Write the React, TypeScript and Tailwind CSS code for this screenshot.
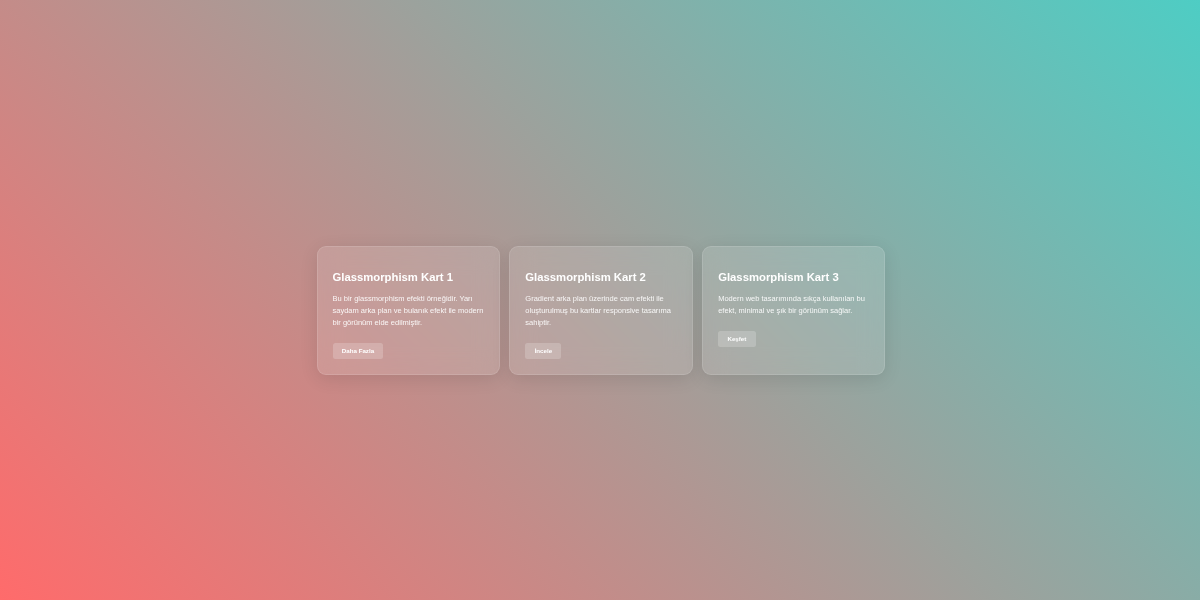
const cards = [
  {
    title: 'Glassmorphism Kart 1',
    text: 'Bu bir glassmorphism efekti örneğidir. Yarı saydam arka plan ve bulanık efekt ile modern bir görünüm elde edilmiştir.',
    action: 'Daha Fazla',
  },
  {
    title: 'Glassmorphism Kart 2',
    text: 'Gradient arka plan üzerinde cam efekti ile oluşturulmuş bu kartlar responsive tasarıma sahiptir.',
    action: 'İncele',
  },
  {
    title: 'Glassmorphism Kart 3',
    text: 'Modern web tasarımında sıkça kullanılan bu efekt, minimal ve şık bir görünüm sağlar.',
    action: 'Keşfet',
  },
];

export default function App() {
  return (
    <div
      className="min-h-screen w-full flex items-center justify-center pt-[21px] pl-[2px] bg-[linear-gradient(45deg,#ff6b6b,#4ecdc4)]"
      style={{ fontFamily: '"Liberation Sans", Arial, sans-serif' }}
    >
      <div className="grid grid-cols-3 gap-[9.5px] w-[569px]">
        {cards.map((card) => (
          <div
            key={card.title}
            className="flex flex-col items-start px-[15px] pt-[24px] pb-[15px] rounded-[9px] bg-white/12 border border-white/12 backdrop-blur-md shadow-[0_4px_18px_rgba(0,0,0,0.1)]"
          >
            <h2 className="text-white font-bold text-[11.3px] leading-[1.2]">{card.title}</h2>
            <p className="mt-[9.3px] text-white/90 text-[7.5px] leading-[12px]">{card.text}</p>
            <button className="mt-[13.5px] h-[16.5px] px-[9.3px] rounded-[2.5px] bg-white/20 text-white text-[6.2px] font-bold leading-none">
              {card.action}
            </button>
          </div>
        ))}
      </div>
    </div>
  );
}
